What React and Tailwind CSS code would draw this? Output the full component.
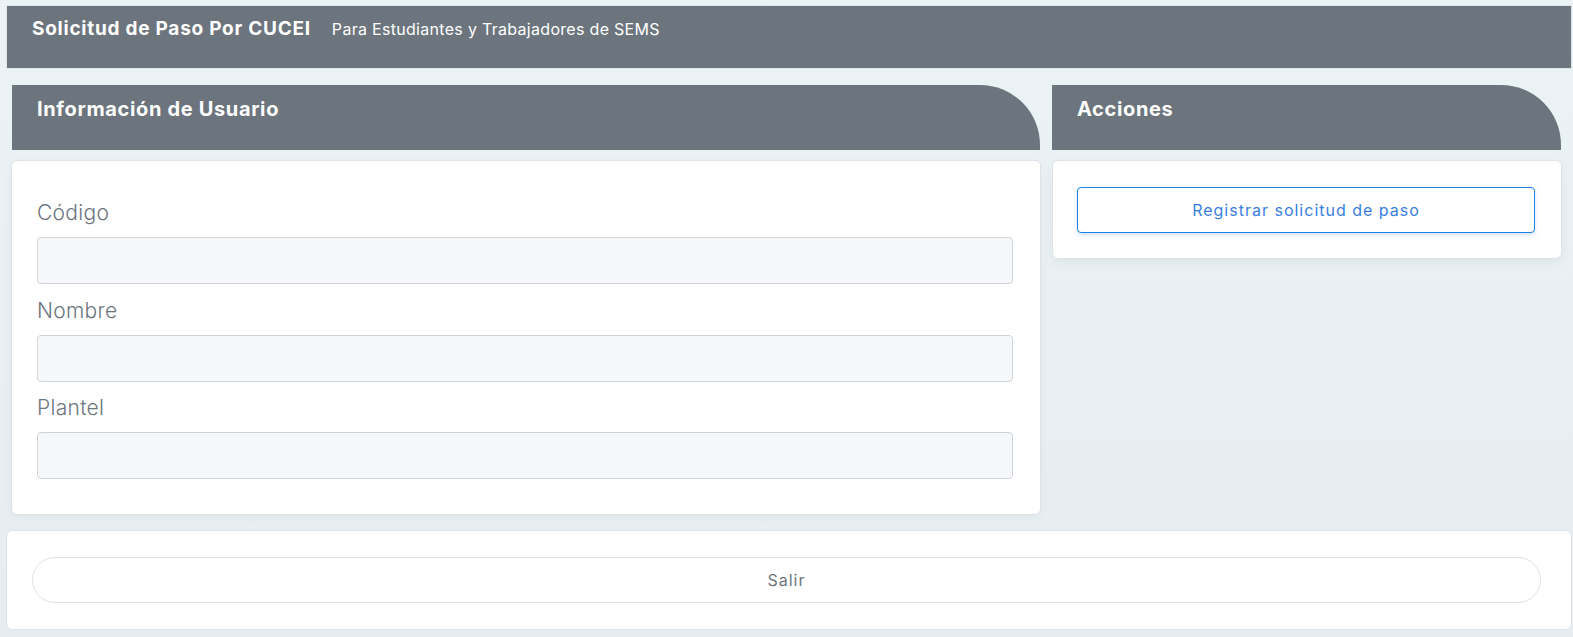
import React from "react";

const font = { fontFamily: "Inter, 'Noto Sans', sans-serif" };

function Field({ label }) {
  return (
    <div className="flex flex-col">
      <label className="text-[21px] leading-[32px] font-light text-[#6c757d] mb-[8px] tracking-[0.3px]">{label}</label>
      <div className="h-[47px] rounded-[4px] border border-[#ced4da] bg-[#f6f7f9]" />
    </div>
  );
}

export default function App() {
  return (
    <div style={font} className="min-h-[637px] w-full bg-gradient-to-b from-[#ecf3f7] to-[#e6edf1] pt-[5px] pl-[6px] pr-[1px] pb-[9px]">
      <div className="h-[64px] bg-[#6c757d] pl-[25px] pt-[9px] flex items-start gap-[21px] border border-[#dfe5ea]">
        <span className="text-white font-bold text-[19px] leading-[28px] tracking-[0.75px]">Solicitud de Paso Por CUCEI</span>
        <span className="text-white text-[16px] leading-[24px] tracking-[0.3px] mt-[2px]">Para Estudiantes y Trabajadores de SEMS</span>
      </div>

      <div className="flex gap-[11px] pl-[5px] mt-[16px]">
        <div className="w-[1030px] flex flex-col gap-[10px]">
          <div className="h-[65px] ml-[1px] mr-[1px] bg-[#6c757d] rounded-tr-[60px] pl-[25px] pt-[9px]">
            <span className="text-white font-bold text-[20px] leading-[30px] tracking-[0.65px]">Información de Usuario</span>
          </div>
          <div className="bg-white rounded-[6px] border border-[#dde3e8] shadow-[0_2px_8px_rgba(0,0,0,0.04)] pl-[25px] pr-[27px] pt-[36px] pb-[35px] flex flex-col gap-[10.5px]">
            <Field label="Código" />
            <Field label="Nombre" />
            <Field label="Plantel" />
          </div>
        </div>
        <div className="w-[510px] flex flex-col gap-[10px]">
          <div className="h-[65px] mr-[1px] bg-[#6c757d] rounded-tr-[60px] pl-[25px] pt-[9px]">
            <span className="text-white font-bold text-[20px] leading-[30px] tracking-[0.65px]">Acciones</span>
          </div>
          <div className="bg-white rounded-[6px] border border-[#dde3e8] shadow-[0_4px_12px_rgba(0,0,0,0.05)] pl-[24px] pr-[26px] pt-[26px] pb-[25px]">
            <button className="w-full h-[46px] rounded-[4px] border border-[#1f80e6] bg-white text-[#3a80e0] text-[16px] tracking-[1px] shadow-[0_2px_4px_rgba(13,110,253,0.2)]">
              Registrar solicitud de paso
            </button>
          </div>
        </div>
      </div>

      <div className="mt-[15px] bg-white rounded-[6px] border border-[#dde3e8] pl-[25px] pr-[30px] pt-[26px] pb-[26px]">
        <button className="w-full h-[46px] rounded-full border border-[#dee2e6] bg-white text-[#6c757d] text-[16px] tracking-[1px]">
          Salir
        </button>
      </div>
    </div>
  );
}
